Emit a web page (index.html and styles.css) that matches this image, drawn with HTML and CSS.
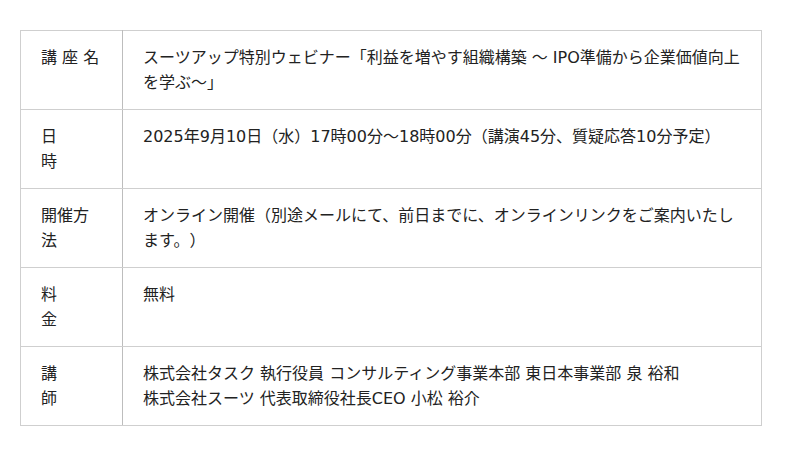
FILE: index.html
```html
<!DOCTYPE html>
<html lang="ja">
<head>
<meta charset="utf-8">
<link rel="stylesheet" href="styles.css">
</head>
<body>
<div class="wrap">
  <table class="info">
    <colgroup><col class="c-label"><col class="c-value"></colgroup>
    <tr>
      <th>講 座 名</th>
      <td>スーツアップ特別ウェビナー「利益を増やす組織構築 〜 IPO準備から企業価値向上を学ぶ〜」</td>
    </tr>
    <tr>
      <th>日<br>時</th>
      <td>2025年9月10日（水）17時00分〜18時00分（講演45分、質疑応答10分予定）</td>
    </tr>
    <tr>
      <th>開催方<br>法</th>
      <td>オンライン開催（別途メールにて、前日までに、オンラインリンクをご案内いたします。）</td>
    </tr>
    <tr>
      <th>料<br>金</th>
      <td>無料</td>
    </tr>
    <tr>
      <th>講<br>師</th>
      <td>株式会社タスク 執行役員 コンサルティング事業本部 東日本事業部 泉 裕和<br>株式会社スーツ 代表取締役社長CEO 小松 裕介</td>
    </tr>
  </table>
</div>
</body>
</html>
```

FILE: styles.css
```css
html, body {
  margin: 0;
  padding: 0;
  background: #fff;
}
.wrap {
  padding: 30px 0 0 20px;
}
.info {
  border-collapse: collapse;
  width: 742px;
  table-layout: fixed;
  font-family: "DejaVu Sans", "Noto Sans CJK JP", sans-serif;
  font-size: 16px;
  line-height: 25px;
  color: #222;
  text-spacing-trim: space-all;
}
.c-label { width: 102px; }
.info th,
.info td {
  border: 1px solid #cfcfcf;
  vertical-align: top;
  text-align: left;
  font-weight: normal;
  padding: 14px 16px 14px 20px;
  height: 50px;
}
.info th {
  border-right-color: #bdbdbd;
}
```
